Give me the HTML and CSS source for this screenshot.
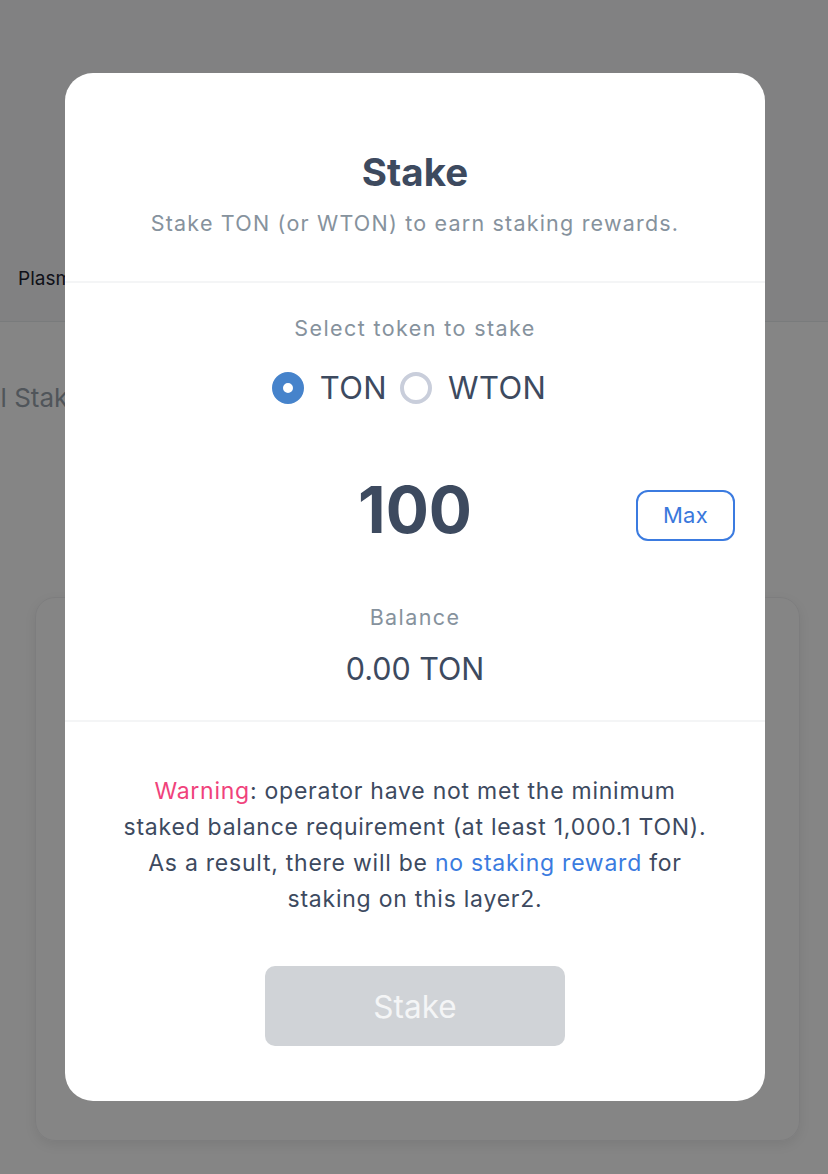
FILE: index.html
```html
<!DOCTYPE html>
<html lang="en">
<head>
<meta charset="utf-8">
<title>Stake</title>
<link rel="stylesheet" href="styles.css">
</head>
<body>
<div class="page">
  <header class="top">
    <div class="tabs"><span class="tab">Plasma Operator</span></div>
  </header>
  <section class="summary">
    <h2 class="summary-title">Total Staked</h2>
  </section>
  <section class="card"></section>
</div>

<div class="overlay">
  <div class="modal">
    <div class="modal-head">
      <h1 class="title">Stake</h1>
      <p class="subtitle">Stake TON (or WTON) to earn staking rewards.</p>
    </div>
    <div class="modal-body">
      <p class="label">Select token to stake</p>
      <div class="radios">
        <label class="radio"><span class="dot dot-on"></span><span class="radio-text">TON</span></label>
        <label class="radio"><span class="dot"></span><span class="radio-text">WTON</span></label>
      </div>
      <div class="amount-row">
        <span class="amount">100</span>
        <button class="max">Max</button>
      </div>
      <p class="label balance-label">Balance</p>
      <p class="balance">0.00 TON</p>
    </div>
    <div class="modal-foot">
      <p class="warning"><span class="warn">Warning</span>: operator have not met the minimum<br>staked balance requirement (at least 1,000.1 TON).<br>As a result, there will be <span class="link">no staking reward</span> for<br>staking on this layer2.</p>
      <button class="stake-btn">Stake</button>
    </div>
  </div>
</div>
</body>
</html>
```

FILE: styles.css
```css
* { box-sizing: border-box; }
html, body { margin: 0; padding: 0; }
body {
  width: 828px;
  height: 1174px;
  overflow: hidden;
  background: #ffffff;
  font-family: Inter, "Noto Sans", "Liberation Sans", sans-serif;
  color: #3d4a5f;
}
.page {
  height: 1174px;
  display: flex;
  flex-direction: column;
}
.top {
  height: 322px;
  background: #f7f8f9;
  border-bottom: 1px solid #e9ebee;
  display: flex;
  align-items: flex-end;
}
.tabs {
  padding: 0 0 31px 18px;
}
.tab {
  font-size: 19px;
  color: #1c2230;
}
.summary {
  padding: 60px 0 0 0;
}
.summary-title {
  margin: 0 0 0 -53px;
  font-size: 26px;
  font-weight: 400;
  color: #99a3ad;
  white-space: nowrap;
}
.card {
  margin: 184px 28px 0 35px;
  height: 544px;
  flex-shrink: 0;
  border-radius: 20px;
  border: 1px solid #f0f0f2;
  box-shadow: 0 4px 12px rgba(0,0,0,0.08);
}

.overlay {
  position: fixed;
  inset: 0;
  background: rgba(0,0,0,0.48);
  display: flex;
  align-items: center;
  justify-content: center;
}
.modal {
  width: 700px;
  height: 1028px;
  margin-left: 2px;
  background: #ffffff;
  border-radius: 28px;
  display: flex;
  flex-direction: column;
  text-align: center;
}
.modal-head {
  padding: 77px 0 44px;
  border-bottom: 2px solid #f4f5f6;
}
.title {
  margin: 0;
  font-size: 38.5px;
  line-height: 44px;
  font-weight: 700;
  color: #3d4a5f;
}
.subtitle {
  margin: 15px 0 0;
  font-size: 21.5px;
  line-height: 28px;
  letter-spacing: 1.2px;
  color: #86929d;
}
.modal-body {
  padding: 31px 0 33px;
  border-bottom: 2px solid #f4f5f6;
}
.label {
  margin: 0;
  font-size: 21.5px;
  line-height: 28px;
  letter-spacing: 1.4px;
  color: #86929d;
}
.radios {
  margin-top: 26px;
  height: 40px;
  display: flex;
  justify-content: center;
  align-items: center;
  gap: 13px;
  padding-right: 12px;
}
.radio {
  display: flex;
  align-items: center;
  gap: 16px;
}
.dot {
  width: 32px;
  height: 32px;
  border-radius: 50%;
  border: 4px solid #c9cedb;
  background: #fff;
}
.dot-on {
  border: 11px solid #4683cb;
  background: #ffffff;
}
.radio-text {
  font-size: 31px;
  line-height: 40px;
  letter-spacing: 0.4px;
  color: #3d4a5f;
}
.amount-row {
  margin-top: 66px;
  display: grid;
  grid-template-columns: 1fr auto 1fr;
  align-items: center;
  height: 72px;
}
.amount {
  grid-column: 2;
  font-size: 64px;
  line-height: 72px;
  font-weight: 700;
  color: #3d4a5f;
}
.max {
  grid-column: 3;
  justify-self: end;
  margin: 10px 30px 0 0;
  width: 99px;
  height: 51px;
  border: 2px solid #3b7be0;
  border-radius: 12px;
  background: #fff;
  font-family: inherit;
  font-size: 22px;
  letter-spacing: 0.3px;
  color: #3a78dc;
  padding: 0;
}
.balance-label {
  margin-top: 57px;
}
.balance {
  margin: 20px 0 0;
  font-size: 30.5px;
  line-height: 36px;
  color: #3d4a5f;
}
.modal-foot {
  padding: 51px 0 0;
  display: flex;
  flex-direction: column;
  align-items: center;
}
.warning {
  margin: 0;
  font-size: 23px;
  line-height: 36px;
  letter-spacing: 0.75px;
  color: #3d4a5f;
}
.warn { color: #f0427b; }
.link { color: #3b7be0; }
.stake-btn {
  margin-top: 49px;
  width: 300px;
  height: 80px;
  border: none;
  border-radius: 10px;
  background: #d0d3d7;
  color: #f4f5f6;
  font-family: inherit;
  font-size: 31.5px;
  padding: 0;
}
```
